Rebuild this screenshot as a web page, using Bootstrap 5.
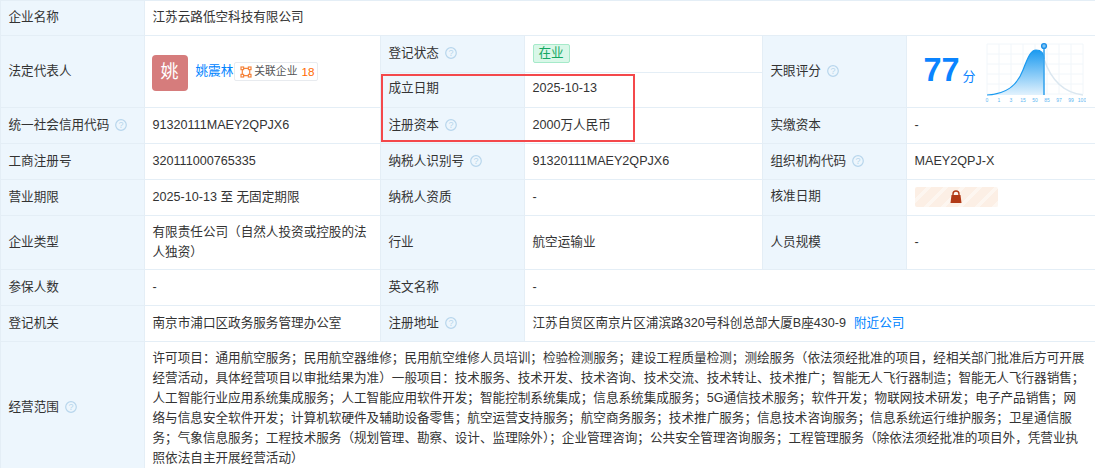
<!DOCTYPE html>
<html lang="zh">
<head>
<meta charset="utf-8">
<title>企业信息</title>
<link href="https://cdn.jsdelivr.net/npm/bootstrap@5.3.0/dist/css/bootstrap.min.css" rel="stylesheet">
<style>
body{background:#fff;font-family:"Liberation Sans","Noto Sans CJK SC",sans-serif;font-size:12.6px;color:#333;margin:0;overflow:hidden}
.sheet{position:relative;width:1095px;height:468px;overflow:hidden}
.info{table-layout:fixed;width:1095px;border-collapse:collapse;margin:0}
.info td{border:1px solid #e4eef6;padding:0 8px 0 7.5px;vertical-align:middle;line-height:19.8px;color:#333;word-break:break-all}
.info td.lab{background:#edf6fd;color:#333}
.info tr{height:36px}
.info tr.tall{height:54px}
.info tr.first{height:35px}
.info tr.upper{height:37px}
.info tr.lower{height:35px}
.info tr.last{height:132px}
.info td.scope{padding:6px 8px 0 7.5px;line-height:20px;vertical-align:top}
.info td.raise{padding-bottom:2px}
.qm{display:inline-block;vertical-align:-2px;margin-left:6px}
.avatar{width:36px;height:36px;border-radius:4px;background:#d67c7c;color:#fff;font-size:18px;margin-top:2px;margin-left:-1px}
.plink{color:#0084ff}
.pname{margin-left:8px;white-space:nowrap}
.rel{border:1px solid #e8ebef;border-radius:2px;height:19px;padding:0 3px 0 5px;margin-left:1px;font-size:10.8px;color:#555}
.rel svg{margin-right:2px}
.rel b{color:#ff6a00;font-weight:400;margin-left:4px;font-size:11.7px}
.stat{display:inline-block;background:#d9f7e8;border:1px solid #a5eac9;color:#14a862;border-radius:2px;padding:0 5px;line-height:17px;height:19px}
.scorecell{white-space:nowrap}
.score{color:#0a84ff;font-size:32.4px;font-weight:700;line-height:1;margin-left:9px;margin-bottom:2px}
.unit{color:#0a84ff;font-size:13px;margin-left:3px;margin-top:10px}
.curve{margin-left:6px;flex-shrink:0}
.lockbox{width:83px;height:20px;border-radius:2px;margin-bottom:2px;background:repeating-linear-gradient(135deg,#fcefe5 0 8px,#fdf6f0 8px 12px)}
.redbox{position:absolute;left:381px;top:74px;width:254px;height:68px;border:2px solid #f4484b;pointer-events:none}
</style>
</head>
<body>
<svg width="0" height="0" class="d-block"><defs><g id="qq"><circle cx="6" cy="6" r="5.3" fill="none" stroke="#b8d6ec" stroke-width="1.2"/><text x="6" y="9.2" text-anchor="middle" font-size="9" fill="#b8d6ec" font-family="Liberation Sans">?</text></g></defs></svg>
<div class="sheet">
<table class="info">
<colgroup><col style="width:144px"><col style="width:236px"><col style="width:144px"><col style="width:238px"><col style="width:144px"><col style="width:189px"></colgroup>
<tr class="first"><td class="lab">企业名称</td><td colspan="5">江苏云路低空科技有限公司</td></tr>
<tr class="upper"><td class="lab" rowspan="2">法定代表人</td>
<td rowspan="2"><div class="d-flex align-items-center">
<div class="avatar d-flex align-items-center justify-content-center flex-shrink-0">姚</div>
<span class="plink pname">姚震林</span>
<span class="rel d-inline-flex align-items-center text-nowrap"><svg width="12" height="12" viewBox="0 0 12 12"><g fill="none" stroke="#f5843c" stroke-width="1.2"><rect x="1" y="1" width="2.6" height="2.6"/><rect x="8.4" y="1" width="2.6" height="2.6"/><rect x="1" y="8.4" width="2.6" height="2.6"/><rect x="8.4" y="8.4" width="2.6" height="2.6"/><path d="M3.6 2.3h4.8M2.3 3.6v4.8M3.6 9.7h4.8M9.7 3.6v4.8"/></g></svg>关联企业<b>18</b></span>
</div></td>
<td class="lab">登记状态<svg class="qm" width="12" height="12"><use href="#qq"/></svg></td>
<td><span class="stat">在业</span></td>
<td class="lab" rowspan="2">天眼评分<svg class="qm" width="12" height="12"><use href="#qq"/></svg></td>
<td rowspan="2" class="scorecell"><div class="d-flex align-items-center">
<span class="score">77</span><span class="unit">分</span>
<svg class="curve" width="104" height="66" viewBox="0 0 104 66">
<defs><linearGradient id="gr" x1="0" y1="0" x2="0" y2="1"><stop offset="0" stop-color="#1a9af0"/><stop offset="1" stop-color="#e2f2fd"/></linearGradient></defs>
<g stroke="#f1f6fa" stroke-width="1"><path d="M5 5h96M5 15h96M5 25h96M5 35h96M5 45h96M5 55h96M5 5v50M17 5v50M29 5v50M41 5v50M53 5v50M65 5v50M77 5v50M89 5v50M101 5v50"/></g>
<path d="M62 20C66 32 76 53 101 56" fill="none" stroke="#dbe7f0" stroke-width="1.4"/>
<path d="M5 56C24 55 35 47 41 31C46 18 49 11 54 11C59 11 62 14 62 20V56Z" fill="url(#gr)"/>
<path d="M5 56C24 55 35 47 41 31C46 18 49 11 54 11C59 11 62 14 62 20" fill="none" stroke="#1a9af0" stroke-width="1.2"/>
<path d="M62 9V56" stroke="#3aa5ee" stroke-width="1.6"/>
<circle cx="62" cy="7" r="2.4" fill="#7cc4f5" stroke="#1c8fe8" stroke-width="1.4"/>
<g font-size="5" fill="#5db7f2" font-family="Liberation Sans" text-anchor="middle"><text x="5" y="63">0</text><text x="17" y="63">1</text><text x="29" y="63">3</text><text x="41" y="63">15</text><text x="53" y="63">50</text><text x="65" y="63">85</text><text x="77" y="63">97</text><text x="89" y="63">99</text><text x="100" y="63">100</text></g>
</svg>
</div></td></tr>
<tr class="lower"><td class="lab raise">成立日期</td><td class="raise">2025-10-13</td></tr>
<tr><td class="lab">统一社会信用代码<svg class="qm" width="12" height="12"><use href="#qq"/></svg></td><td>91320111MAEY2QPJX6</td><td class="lab">注册资本<svg class="qm" width="12" height="12"><use href="#qq"/></svg></td><td>2000万人民币</td><td class="lab">实缴资本</td><td>-</td></tr>
<tr><td class="lab">工商注册号</td><td>320111000765335</td><td class="lab">纳税人识别号<svg class="qm" width="12" height="12"><use href="#qq"/></svg></td><td>91320111MAEY2QPJX6</td><td class="lab">组织机构代码<svg class="qm" width="12" height="12"><use href="#qq"/></svg></td><td>MAEY2QPJ-X</td></tr>
<tr><td class="lab">营业期限</td><td>2025-10-13 至 无固定期限</td><td class="lab">纳税人资质</td><td>-</td><td class="lab raise">核准日期</td><td><div class="lockbox d-flex align-items-center justify-content-center"><svg width="12" height="13" viewBox="0 0 12 13"><path d="M3 6V4a3 3 0 0 1 6 0v2" fill="none" stroke="#b23a17" stroke-width="1.4"/><path d="M1.5 5H10.500L11.500 13H0.500Z" fill="#b23a17"/></svg></div></td></tr>
<tr class="tall"><td class="lab">企业类型</td><td>有限责任公司（自然人投资或控股的法人独资）</td><td class="lab">行业</td><td>航空运输业</td><td class="lab">人员规模</td><td>-</td></tr>
<tr><td class="lab">参保人数</td><td>-</td><td class="lab">英文名称</td><td colspan="3">-</td></tr>
<tr><td class="lab">登记机关</td><td>南京市浦口区政务服务管理办公室</td><td class="lab">注册地址<svg class="qm" width="12" height="12"><use href="#qq"/></svg></td><td colspan="3">江苏自贸区南京片区浦滨路320号科创总部大厦B座430-9<span class="plink ms-2">附近公司</span></td></tr>
<tr class="last"><td class="lab">经营范围<svg class="qm" width="12" height="12"><use href="#qq"/></svg></td><td colspan="5" class="scope">许可项目：通用航空服务；民用航空器维修；民用航空维修人员培训；检验检测服务；建设工程质量检测；测绘服务（依法须经批准的项目，经相关部门批准后方可开展经营活动，具体经营项目以审批结果为准）一般项目：技术服务、技术开发、技术咨询、技术交流、技术转让、技术推广；智能无人飞行器制造；智能无人飞行器销售；人工智能行业应用系统集成服务；人工智能应用软件开发；智能控制系统集成；信息系统集成服务；5G通信技术服务；软件开发；物联网技术研发；电子产品销售；网络与信息安全软件开发；计算机软硬件及辅助设备零售；航空运营支持服务；航空商务服务；技术推广服务；信息技术咨询服务；信息系统运行维护服务；卫星通信服务；气象信息服务；工程技术服务（规划管理、勘察、设计、监理除外）；企业管理咨询；公共安全管理咨询服务；工程管理服务（除依法须经批准的项目外，凭营业执照依法自主开展经营活动）</td></tr>
</table>
<div class="redbox"></div>
</div>
<script src="https://cdn.jsdelivr.net/npm/bootstrap@5.3.0/dist/js/bootstrap.bundle.min.js"></script>
</body>
</html>
